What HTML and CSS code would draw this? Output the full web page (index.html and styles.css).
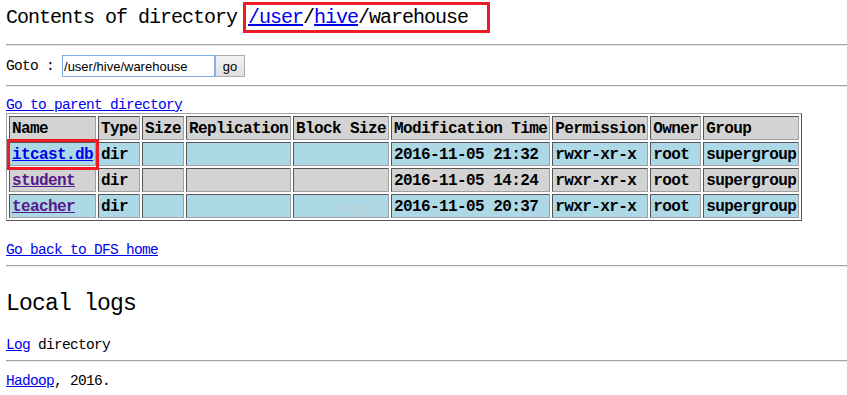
FILE: index.html
```html
<!DOCTYPE html>
<html lang="en">
<head>
    <meta charset="UTF-8">
    <title>HDFS:/user/hive/warehouse</title>
    <link rel="stylesheet" href="styles.css">
</head>
<body>
    <h1 class="title">Contents of directory<span class="path-box"><a href="#">/user</a>/<a href="#">hive</a>/warehouse</span></h1>
    <hr>
    <form class="goto">
        <span>Goto :</span>
        <input type="text" value="/user/hive/warehouse">
        <button type="button">go</button>
    </form>
    <hr class="hr-goto">

    <a class="block-link parent-link" href="#">Go to parent directory</a>

    <div class="listing">
        <table class="files">
            <tr class="head">
                <td>Name</td><td>Type</td><td>Size</td><td>Replication</td><td>Block Size</td><td>Modification Time</td><td>Permission</td><td>Owner</td><td>Group</td>
            </tr>
            <tr class="blue">
                <td class="name-cell"><a href="#">itcast.db</a><span class="mark"></span></td><td>dir</td><td></td><td></td><td></td><td>2016-11-05 21:32</td><td>rwxr-xr-x</td><td>root</td><td>supergroup</td>
            </tr>
            <tr class="grey">
                <td><a class="visited" href="#">student</a></td><td>dir</td><td></td><td></td><td></td><td>2016-11-05 14:24</td><td>rwxr-xr-x</td><td>root</td><td>supergroup</td>
            </tr>
            <tr class="blue">
                <td><a class="visited" href="#">teacher</a></td><td>dir</td><td></td><td></td><td class="wm-cell"><span class="watermark">http://</span></td><td>2016-11-05 20:37</td><td>rwxr-xr-x</td><td>root</td><td>supergroup</td>
            </tr>
        </table>
    </div>

    <a class="block-link back-link" href="#">Go back to DFS home</a>
    <hr class="hr-back">

    <h2 class="logs-title">Local logs</h2>
    <p class="logs-line"><a href="#">Log</a> directory</p>
    <hr class="hr-logs">
    <p class="footer"><a href="#">Hadoop</a>, 2016.</p>
</body>
</html>
```
FILE: styles.css
```css
body {
    margin: 0;
    padding: 0 0 0 6px;
    font-family: "Liberation Mono", "DejaVu Sans Mono", monospace;
    font-size: 14.5px;
    line-height: 16px;
    letter-spacing: -0.7px;
    color: #000;
    background: #fff;
}
a {
    color: #0000ee;
}
a.visited {
    color: #551a8b;
}
hr {
    margin: 11px 0 0;
    height: 0;
    border: 0;
    border-top: 1px solid #a0a0a0;
    border-bottom: 1px solid #ececec;
}
.title {
    margin: 2px 0 0;
    height: 31px;
    display: flex;
    align-items: center;
    font-size: 20px;
    line-height: 25px;
    letter-spacing: -1px;
    font-weight: normal;
}
.path-box {
    margin-left: 6px;
    height: 25px;
    padding: 0 19px 0 2px;
    border: 3px solid #ed1c24;
}
.goto {
    display: flex;
    align-items: center;
    height: 22px;
    margin: 9px 0 0;
}
.goto input {
    box-sizing: border-box;
    width: 153px;
    height: 22px;
    margin: 0 0 0 8px;
    padding: 0 1px;
    border: 1px solid #7eb0e6;
    font: 13px "Liberation Sans", Arial, sans-serif;
    letter-spacing: 0;
    color: #000;
    outline: none;
}
.goto button {
    box-sizing: border-box;
    width: 30px;
    height: 22px;
    margin: 0;
    padding: 0;
    border: 1px solid #adadad;
    border-radius: 0;
    background: linear-gradient(#f3f3f3, #e1e1e1);
    font: 13px "Liberation Sans", Arial, sans-serif;
    letter-spacing: 0;
    color: #000;
}
.hr-goto {
    margin-top: 8px;
}
.block-link {
    display: block;
    width: max-content;
}
.parent-link {
    margin-top: 10px;
}
.listing {
    width: max-content;
}
.files {
    border-collapse: separate;
    border-spacing: 2px;
    border: 1px solid;
    border-color: #a0a0a0 #555 #555 #a0a0a0;
    font-size: 16px;
    font-weight: bold;
    letter-spacing: -0.6px;
}
.files td {
    height: 19px;
    padding: 3px 2px 0;
    line-height: 19px;
    border: 1px solid;
    border-color: #555 #a0a0a0 #a0a0a0 #555;
    white-space: nowrap;
    vertical-align: top;
}
.head td,
.grey td {
    background: #d3d3d3;
}
.blue td {
    background: #add8e6;
}
.name-cell {
    position: relative;
}
.mark {
    position: absolute;
    left: -3px;
    top: -4px;
    box-sizing: border-box;
    width: 92px;
    height: 31px;
    border: 3px solid #ed1c24;
}
.wm-cell {
    text-align: right;
}
.watermark {
    display: inline-block;
    height: 19px;
    line-height: 19px;
    vertical-align: top;
    font-family: "Liberation Serif", serif;
    font-size: 16px;
    font-weight: normal;
    letter-spacing: 1.5px;
    color: rgba(200, 206, 208, 0.85);
}
.back-link {
    margin-top: 21px;
}
.hr-back {
    margin-top: 7px;
}
.logs-title {
    margin: 24px 0 0;
    font-size: 23px;
    line-height: 26px;
    letter-spacing: -0.8px;
    font-weight: normal;
}
.logs-line {
    margin: 20px 0 0;
}
.hr-logs {
    margin-top: 7px;
}
.footer {
    margin: 11px 0 0;
}
```
